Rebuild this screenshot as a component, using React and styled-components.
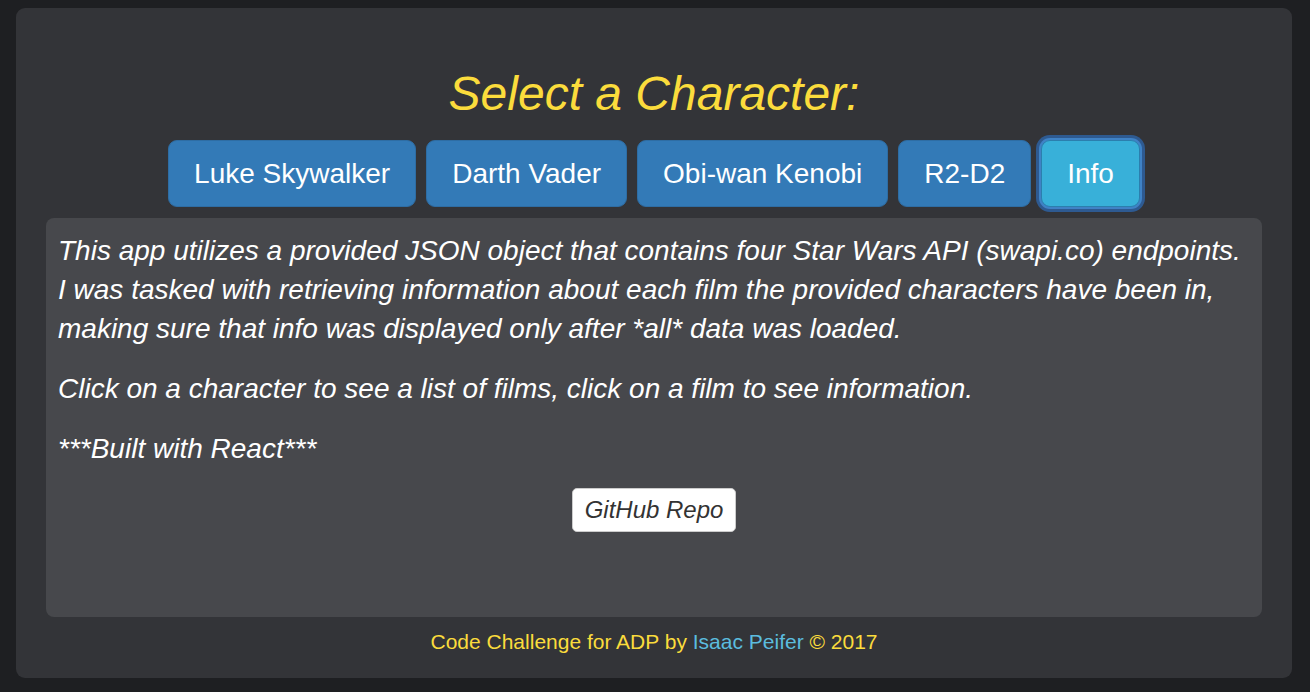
import React from "react";
import styled, { createGlobalStyle } from "styled-components";

const GlobalStyle = createGlobalStyle`
  html, body {
    margin: 0;
    padding: 0;
    background: #1e1f22;
    font-family: "Liberation Sans", Arial, Helvetica, sans-serif;
  }
  * {
    box-sizing: border-box;
  }
`;

const Page = styled.div`
  padding: 8px 18px 14px 16px;
`;

const Card = styled.div`
  background: #333438;
  border-radius: 9px;
  height: 670px;
  padding: 58px 30px 0;
  display: flex;
  flex-direction: column;
  align-items: center;
`;

const Title = styled.h2`
  margin: 0;
  font-size: 48px;
  line-height: 55px;
  font-style: italic;
  font-weight: normal;
  color: #fbdc3c;
`;

const ButtonRow = styled.div`
  display: flex;
  gap: 10px;
  margin-top: 19px;
`;

const CharButton = styled.button`
  font-family: inherit;
  font-size: 28px;
  line-height: 37px;
  padding: 14px 25px;
  color: #fff;
  background: ${(p) => (p.$active ? "#38b0d9" : "#337ab7")};
  border: 1px solid ${(p) => (p.$active ? "#2b7fae" : "#2e6da4")};
  border-radius: 9px;
  cursor: pointer;
  box-shadow: ${(p) =>
    p.$active ? "0 0 0 2px #3f82c6, 0 0 0 5px rgba(46, 94, 155, 0.9)" : "none"};
`;

const Panel = styled.div`
  align-self: stretch;
  margin-top: 11px;
  height: 399px;
  background: #47484c;
  border-radius: 8px;
  padding: 13px 12px 10px;
  display: flex;
  flex-direction: column;
`;

const Text = styled.p`
  margin: 0 0 21px;
  font-size: 28px;
  line-height: 39px;
  font-style: italic;
  color: #fff;
`;

const RepoLink = styled.a`
  align-self: center;
  margin-top: -1px;
  font-size: 24px;
  line-height: 33px;
  padding: 4px 12px 5px;
  font-style: italic;
  color: #333;
  background: #fff;
  border: 1px solid #ccc;
  border-radius: 5px;
  text-decoration: none;
`;

const Footer = styled.footer`
  margin-top: 10px;
  font-size: 21px;
  line-height: 30px;
  color: #fbdc3c;
  a {
    color: #5bbcdf;
    text-decoration: none;
  }
`;

const characters = ["Luke Skywalker", "Darth Vader", "Obi-wan Kenobi", "R2-D2"];

export default function App() {
  return (
    <Page>
      <GlobalStyle />
      <Card>
        <Title>Select a Character:</Title>
        <ButtonRow>
          {characters.map((name) => (
            <CharButton key={name}>{name}</CharButton>
          ))}
          <CharButton $active>Info</CharButton>
        </ButtonRow>
        <Panel>
          <Text>
            This app utilizes a provided JSON object that contains four Star Wars API (swapi.co) endpoints.
            I was tasked with retrieving information about each film the provided characters have been in,
            making sure that info was displayed only after *all* data was loaded.
          </Text>
          <Text>Click on a character to see a list of films, click on a film to see information.</Text>
          <Text>***Built with React***</Text>
          <RepoLink href="#">GitHub Repo</RepoLink>
        </Panel>
        <Footer>
          Code Challenge for ADP by <a href="#">Isaac Peifer</a> © 2017
        </Footer>
      </Card>
    </Page>
  );
}
